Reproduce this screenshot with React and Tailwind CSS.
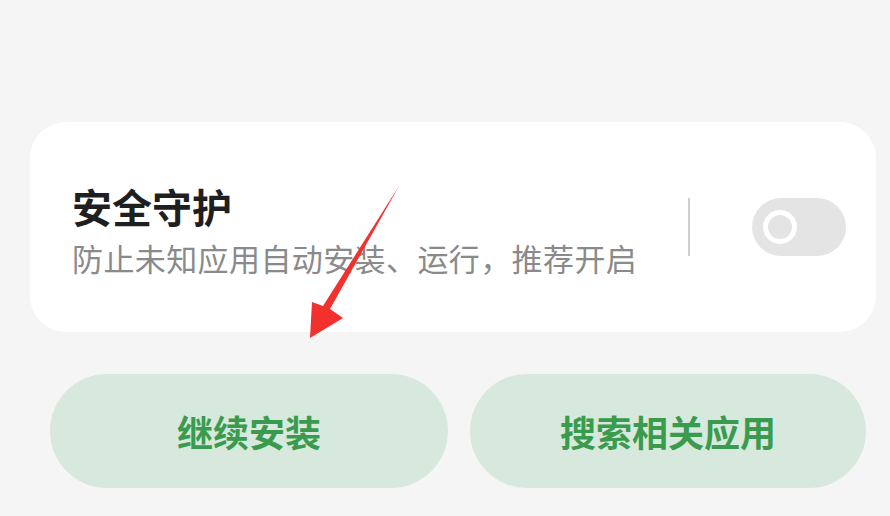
import React from 'react';

const font = { fontFamily: '"Noto Sans CJK SC", "Noto Sans", sans-serif' };

function Toggle() {
  return (
    <div className="w-[94px] h-[58px] rounded-full bg-[#e4e4e4] flex items-center pl-[11px]">
      <div className="w-[34px] h-[34px] rounded-full border-[5px] border-white bg-[#e4e4e4]" />
    </div>
  );
}

export default function App() {
  return (
    <div
      className="relative w-[890px] h-[516px] bg-[#f5f5f5] overflow-hidden flex flex-col pt-[122px]"
      style={font}
    >
      <div className="ml-[30px] w-[846px] h-[210px] bg-white rounded-[36px] flex items-center pl-[42px] pr-[30px]">
        <div className="flex-1 flex flex-col pt-[6px]">
          <div className="text-[40px] leading-[48px] font-bold text-[#1f1f1f]">安全守护</div>
          <div className="text-[31px] leading-[40px] tracking-[0.4px] text-[#8a8a8a] mt-[8px]">
            防止未知应用自动安装、运行，推荐开启
          </div>
        </div>
        <div className="w-[2px] h-[58px] bg-[#cfcfcf] mr-[62px]" />
        <Toggle />
      </div>

      <div className="flex gap-[22px] ml-[50px] mt-[42px]">
        <button className="w-[398px] h-[114px] rounded-full bg-[#d6e9dc] text-[36px] font-bold text-[#3a9b4f]">
          继续安装
        </button>
        <button className="w-[396px] h-[114px] rounded-full bg-[#d6e9dc] text-[36px] font-bold text-[#3a9b4f]">
          搜索相关应用
        </button>
      </div>

      <svg className="absolute left-0 top-0 pointer-events-none" width="890" height="516">
        <polygon
          points="399,186 330,309 343,318 310,338 312,302 323,306"
          fill="#f2302e"
        />
      </svg>
    </div>
  );
}
